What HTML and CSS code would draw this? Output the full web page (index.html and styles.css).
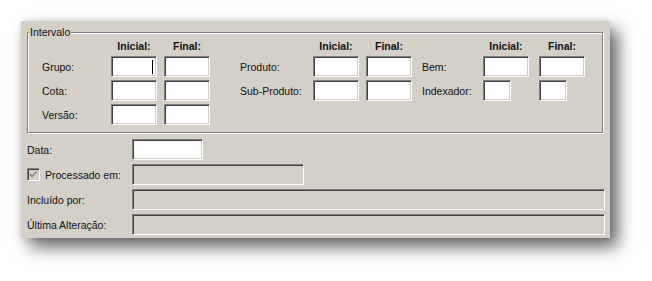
FILE: index.html
```html
<!DOCTYPE html>
<html lang="pt-BR">
<head>
  <meta charset="UTF-8" />
  <title>Intervalo</title>
  <link rel="stylesheet" href="styles.css">
</head>
<body>
  <div class="window">
    <!-- Intervalo -->
    <div class="group">
      <span class="legend">Intervalo</span>
      <div class="ranges">
        <div class="range range-a">
          <span></span><b>Inicial:</b><b>Final:</b>
          <label>Grupo:</label><div class="edit focus"><i class="caret"></i></div><div class="edit"></div>
          <label>Cota:</label><div class="edit"></div><div class="edit"></div>
          <label>Versão:</label><div class="edit"></div><div class="edit"></div>
        </div>
        <div class="range range-b">
          <span></span><b>Inicial:</b><b>Final:</b>
          <label>Produto:</label><div class="edit"></div><div class="edit"></div>
          <label>Sub-Produto:</label><div class="edit"></div><div class="edit"></div>
        </div>
        <div class="range range-c">
          <span></span><b>Inicial:</b><b>Final:</b>
          <label>Bem:</label><div class="edit"></div><div class="edit"></div>
          <label>Indexador:</label><div class="edit short"></div><div class="edit short"></div>
        </div>
      </div>
    </div>

    <!-- dados -->
    <div class="info">
      <label>Data:</label>
      <div class="edit date"></div>
      <label class="check">
        <span class="box">
          <svg width="9" height="9" viewBox="0 0 9 9"><path d="M1 4 L3 6.5 L8 1.5" fill="none" stroke="#8a8a8a" stroke-width="1.6"/></svg>
        </span>
        Processado em:
      </label>
      <div class="edit off proc"></div>
      <label>Incluído por:</label>
      <div class="edit off"></div>
      <label>Última Alteração:</label>
      <div class="edit off"></div>
    </div>
  </div>
</body>
</html>
```

FILE: styles.css
```css
html, body {
  height: 100%;
}
body {
  margin: 0;
  background-color: #fff;
  font-family: "Liberation Sans", Arial, sans-serif;
  font-size: 10.5px;
  color: #111;
}
.window {
  margin: 21px 0 0 21px;
  width: 589px;
  height: 217px;
  box-sizing: border-box;
  padding: 0 5px 0 6px;
  background-color: #d4d0c8;
  box-shadow: 8px 9px 16px rgba(0, 0, 0, 0.6), 0 0 6px rgba(0, 0, 0, 0.12);
  overflow: hidden;
}
.group {
  position: relative;
  margin-top: 11px;
  width: 576px;
  height: 101px;
  box-sizing: border-box;
  border: 1px solid #808080;
  box-shadow: inset 1px 1px 0 #fff, 1px 1px 0 #fff;
  padding: 7px 0 0 14px;
}
.legend {
  position: absolute;
  top: -7px;
  left: 1px;
  padding: 0 1px;
  line-height: 12px;
  background-color: #d4d0c8;
}
.ranges {
  display: flex;
}
.range {
  display: grid;
  grid-template-rows: 13px repeat(3, 21px);
  row-gap: 3px;
  column-gap: 7px;
  align-items: center;
}
.range b {
  text-align: center;
  line-height: 13px;
}
.range-a {
  grid-template-columns: 62px 46px 46px;
}
.range-b {
  margin-left: 30px;
  grid-template-columns: 66px 46px 46px;
}
.range-c {
  margin-left: 10px;
  grid-template-columns: 51px 46px 46px;
  column-gap: 10px;
}
.edit {
  position: relative;
  height: 21px;
  box-sizing: border-box;
  background-color: #fff;
  border-top: 1px solid #808080;
  border-left: 1px solid #808080;
  border-bottom: 1px solid #fff;
  border-right: 1px solid #fff;
  box-shadow: inset 1px 1px 0 #404040, inset -1px -1px 0 #d4d0c8;
}
.edit.short {
  width: 28px;
}
.edit.off {
  background-color: #d4d0c8;
}
.caret {
  position: absolute;
  right: 3px;
  top: 3px;
  width: 1px;
  height: 14px;
  background-color: #000;
}
.info {
  display: grid;
  grid-template-columns: 98px 473px;
  grid-auto-rows: 21px;
  row-gap: 4px;
  column-gap: 7px;
  align-items: center;
  margin-top: 6px;
}
.edit.date {
  width: 71px;
}
.edit.proc {
  width: 172px;
}
.check {
  display: flex;
  align-items: center;
  gap: 5px;
}
.box {
  display: flex;
  align-items: center;
  justify-content: center;
  width: 13px;
  height: 13px;
  box-sizing: border-box;
  background-color: #d4d0c8;
  border-top: 1px solid #808080;
  border-left: 1px solid #808080;
  border-bottom: 1px solid #fff;
  border-right: 1px solid #fff;
  box-shadow: inset 1px 1px 0 #404040, inset -1px -1px 0 #d4d0c8;
}
```
